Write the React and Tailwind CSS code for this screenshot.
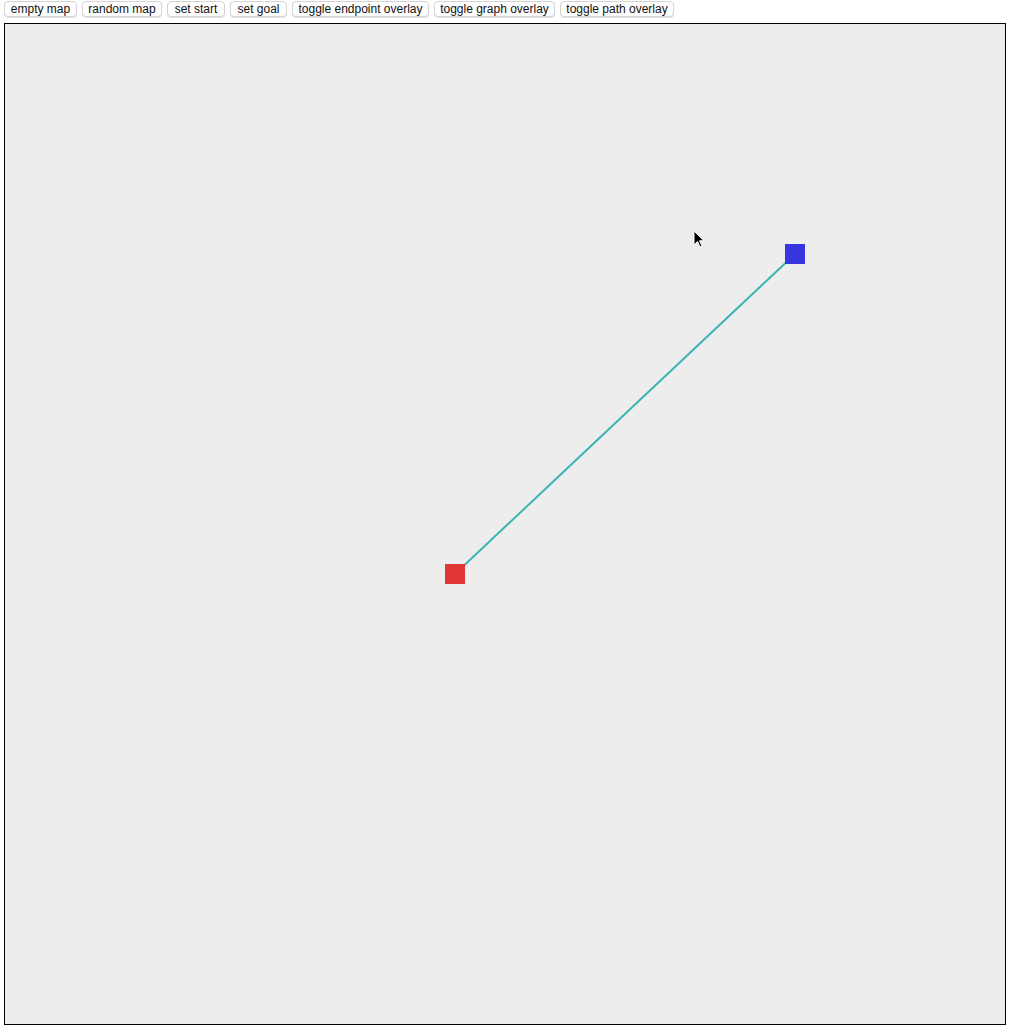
import React from 'react';

const buttons = [
  { label: 'empty map', w: 'w-[73px]' },
  { label: 'random map', w: 'w-[80px]' },
  { label: 'set start', w: 'w-[58px]' },
  { label: 'set goal', w: 'w-[57px]' },
  { label: 'toggle endpoint overlay', w: 'w-[137px]' },
  { label: 'toggle graph overlay', w: 'w-[121px]' },
  { label: 'toggle path overlay', w: 'w-[114px]' },
];

// map coords are relative to the 1000x1000 canvas
const start = { x: 450, y: 550 };
const goal = { x: 790, y: 230 };

export default function App() {
  return (
    <div className="min-h-screen bg-white font-['Liberation_Sans',Arial,sans-serif] text-black">
      <div className="flex gap-[5px] pl-[4px] pt-[1px]">
        {buttons.map((b) => (
          <button
            key={b.label}
            className={`${b.w} h-[16px] rounded-[4px] border border-[#d4d4d4] bg-white text-[12px] leading-none text-[#111] flex items-center justify-center shadow-[0_1px_0_#e6e6e6]`}
          >
            {b.label}
          </button>
        ))}
      </div>

      <div className="ml-[4px] mt-[6px] w-[1002px] h-[1002px] border border-black bg-[#ededed] relative">
        <svg width="1000" height="1000" className="block">
          <line x1={start.x} y1={start.y} x2={goal.x} y2={goal.y} stroke="#3ab4b0" strokeWidth="2" />
          <rect x={start.x - 10} y={start.y - 10} width="20" height="20" fill="#e23636" />
          <rect x={goal.x - 10} y={goal.y - 10} width="20" height="20" fill="#3636e0" />
        </svg>

        {/* mouse cursor captured in screenshot */}
        <svg width="14" height="20" viewBox="0 0 14 20" className="absolute left-[688px] top-[206px]">
          <path d="M1 1 L1 15 L4.5 11.5 L7 17 L9 16 L6.5 10.8 L11 10.8 Z" fill="black" stroke="white" strokeWidth="1" />
        </svg>
      </div>
    </div>
  );
}
